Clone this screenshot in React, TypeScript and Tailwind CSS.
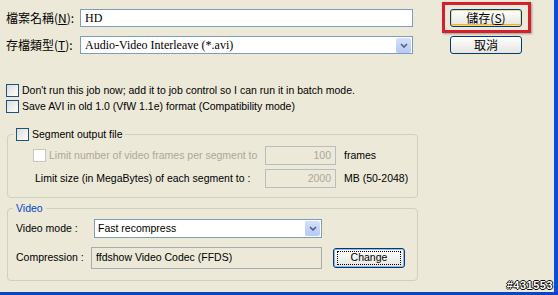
import type { ReactNode } from "react";

const ui = "font-['Liberation_Sans',Arial,sans-serif] text-[10.5px] whitespace-nowrap";
const cjk = "font-['Noto_Sans_CJK_TC','Noto_Sans',sans-serif] text-[12px] whitespace-nowrap";

function CheckBox({ disabled = false }: { disabled?: boolean }) {
  return (
    <span
      className={
        disabled
          ? "block h-[13px] w-[13px] shrink-0 border border-[#CAC8BB] bg-white"
          : "block h-[13px] w-[13px] shrink-0 border border-[#1C5180] bg-gradient-to-br from-[#DCDCD7] to-white"
      }
    />
  );
}

function DropArrow() {
  return (
    <span className="mr-[1px] flex h-[15px] w-[15px] items-center justify-center rounded-[2px] bg-gradient-to-b from-[#D4E0FB] to-[#B5C9F5]">
      <svg width="8" height="5" viewBox="0 0 8 5">
        <path d="M1 1 L4 4 L7 1" fill="none" stroke="#4D6185" strokeWidth="1.6" />
      </svg>
    </span>
  );
}

function XpButton({
  children,
  className,
}: {
  children: ReactNode;
  className: string;
}) {
  return (
    <div
      className={`flex items-center justify-center rounded-[3px] border border-[#003C74] bg-gradient-to-b from-white to-[#E6E5DE] ${className}`}
    >
      {children}
    </div>
  );
}

function App() {
  return (
    <div className="relative flex h-[295px] w-[558px] flex-col overflow-hidden bg-[#ECE9D8] text-black">
      <div className="flex flex-1">
        <div className="flex-1">
          {/* file name + type */}
          <div className="flex pt-[9px]">
            <div className="flex flex-col pl-[6px]">
              <div className="flex h-[18px] items-center">
                <div className={`w-[74px] ${cjk}`}>
                  檔案名稱(<span className="underline">N</span>):
                </div>
                <div className="flex h-[18px] w-[333px] items-center border border-[#7F9DB9] bg-white pl-[4px] font-['Liberation_Serif',serif] text-[12px]">
                  HD
                </div>
              </div>
              <div className="mt-[9px] flex h-[18px] items-center">
                <div className={`w-[74px] ${cjk}`}>
                  存檔類型(<span className="underline">T</span>):
                </div>
                <div className="flex h-[18px] w-[333px] items-center justify-between border border-[#7F9DB9] bg-white pl-[4px] font-['Liberation_Serif',serif] text-[12px]">
                  <span>Audio-Video Interleave (*.avi)</span>
                  <DropArrow />
                </div>
              </div>
            </div>
            <div className="relative ml-[37px] flex flex-col">
              <XpButton className={`h-[18px] w-[72px] shadow-[inset_0_0_0_1px_#F8D98A,inset_0_-2px_0_#F0B030] ${cjk}`}>
                儲存(<span className="underline">S</span>)
              </XpButton>
              <XpButton className={`mt-[9px] h-[18px] w-[72px] ${cjk}`}>取消</XpButton>
              <div className="absolute top-[-7px] left-[-8px] h-[31px] w-[89px] border-[3px] border-[#D4202C] shadow-[1px_1px_2px_rgba(0,0,0,0.35)]" />
            </div>
          </div>

          {/* options */}
          <div className={`mt-[30px] flex flex-col gap-[3px] pl-[6px] ${ui}`}>
            <div className="flex h-[13px] items-center gap-[3px]">
              <CheckBox />
              <span>
                Don't run this job now; add it to job control so I can run it in batch mode.
              </span>
            </div>
            <div className="flex h-[13px] items-center gap-[3px]">
              <CheckBox />
              <span>Save AVI in old 1.0 (VfW 1.1e) format (Compatibility mode)</span>
            </div>
          </div>

          {/* segment group */}
          <fieldset className={`mt-[15px] ml-[7px] w-[411px] rounded-[4px] border border-[#D0D0BF] pb-[9px] ${ui}`}>
            <legend className="ml-[5px] flex h-[13px] items-center gap-[3px] px-[3px]">
              <CheckBox />
              <span>Segment output file</span>
            </legend>
            <div className="mt-[5px] flex h-[19px] items-center">
              <div className="flex w-[257px] items-center gap-[3px] pl-[25px] text-[#ACA899]">
                <CheckBox disabled />
                <span>Limit number of video frames per segment to</span>
              </div>
              <div className="flex h-[19px] w-[71px] items-center justify-end border border-[#B8BDC2] pr-[4px] text-[#ACA899]">
                100
              </div>
              <span className="ml-[8px]">frames</span>
            </div>
            <div className="mt-[4px] flex h-[19px] items-center">
              <div className="w-[257px] pl-[27px]">
                Limit size (in MegaBytes) of each segment to :
              </div>
              <div className="flex h-[19px] w-[71px] items-center justify-end border border-[#B8BDC2] pr-[4px] text-[#ACA899]">
                2000
              </div>
              <span className="ml-[8px]">MB (50-2048)</span>
            </div>
          </fieldset>

          {/* video group */}
          <fieldset className={`mt-[4px] ml-[7px] w-[411px] rounded-[4px] border border-[#D0D0BF] pb-[11px] ${ui}`}>
            <legend className="ml-[5px] h-[13px] px-[3px] leading-[13px] text-[#0046D5]">Video</legend>
            <div className="mt-[4px] flex h-[19px] items-center">
              <div className="w-[86px] pl-[8px]">Video mode :</div>
              <div className="flex h-[19px] w-[228px] items-center justify-between border border-[#7F9DB9] bg-white pl-[3px]">
                <span>Fast recompress</span>
                <DropArrow />
              </div>
            </div>
            <div className="mt-[9px] flex h-[22px] items-center">
              <div className="w-[83px] pl-[8px]">Compression :</div>
              <div className="flex h-[22px] w-[231px] items-center border border-[#A5ACB2] pl-[4px]">
                ffdshow Video Codec (FFDS)
              </div>
              <XpButton className="ml-[11px] h-[20px] w-[72px] shadow-[inset_0_0_0_1px_#9CB4E8]">
                <span className="flex h-[14px] w-[64px] items-center justify-center border border-dotted border-black">
                  Change
                </span>
              </XpButton>
            </div>
          </fieldset>
        </div>
        <div className="w-[4px] bg-[#0A4ED6]" />
      </div>
      <div className="h-[3px] bg-[#0A44C4]" />
      <div className="absolute right-[5px] bottom-[2px] font-['Liberation_Sans',Arial,sans-serif] text-[11px] font-bold tracking-[0.5px] text-white [text-shadow:1px_0_0_#000,-1px_0_0_#000,0_1px_0_#000,0_-1px_0_#000]">
        #431553
      </div>
    </div>
  );
}

export default App;
